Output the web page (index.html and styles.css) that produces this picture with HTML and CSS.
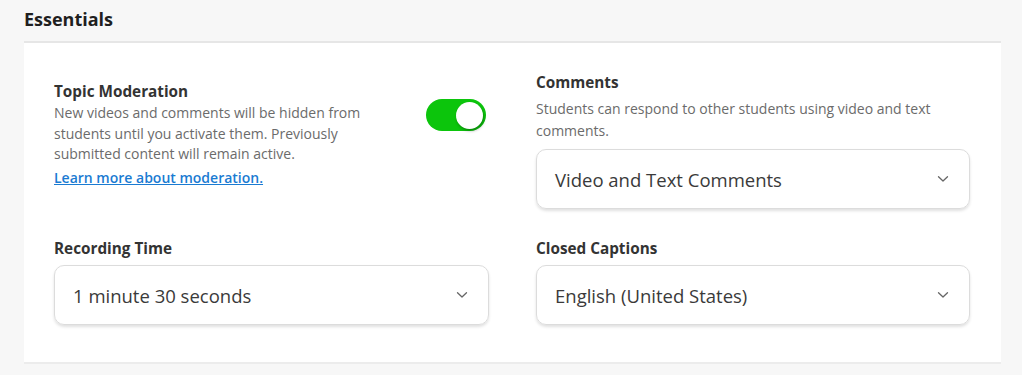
FILE: index.html
```html
<!DOCTYPE html>
<html lang="en">
<head>
    <meta charset="UTF-8">
    <meta name="viewport" content="width=device-width, initial-scale=1.0">
    <title>Essentials</title>
    <link rel="stylesheet" href="styles.css">
</head>
<body>

    <div class="essentials">
        <h2 class="section-title">Essentials</h2>

        <div class="card">
            <div class="setting moderation">
                <div class="moderation-text">
                    <h3 class="setting-label">Topic Moderation</h3>
                    <p class="setting-desc">New videos and comments will be hidden from students until you activate them. Previously submitted content will remain active.</p>
                    <a class="learn-link" href="#">Learn more about moderation.</a>
                </div>
                <button class="toggle is-on" aria-label="Topic Moderation"><span class="knob"></span></button>
            </div>

            <div class="setting">
                <h3 class="setting-label">Comments</h3>
                <p class="setting-desc">Students can respond to other students using video and text comments.</p>
                <div class="select-box">
                    <span>Video and Text Comments</span>
                    <svg class="chevron" width="12" height="8" viewBox="0 0 12 8"><path d="M1.5 1.8 L6 6 L10.5 1.8" fill="none" stroke="#666" stroke-width="1.3" stroke-linecap="round" stroke-linejoin="round"/></svg>
                </div>
            </div>

            <div class="setting">
                <h3 class="setting-label">Recording Time</h3>
                <div class="select-box">
                    <span>1 minute 30 seconds</span>
                    <svg class="chevron" width="12" height="8" viewBox="0 0 12 8"><path d="M1.5 1.8 L6 6 L10.5 1.8" fill="none" stroke="#666" stroke-width="1.3" stroke-linecap="round" stroke-linejoin="round"/></svg>
                </div>
            </div>

            <div class="setting">
                <h3 class="setting-label">Closed Captions</h3>
                <div class="select-box">
                    <span>English (United States)</span>
                    <svg class="chevron" width="12" height="8" viewBox="0 0 12 8"><path d="M1.5 1.8 L6 6 L10.5 1.8" fill="none" stroke="#666" stroke-width="1.3" stroke-linecap="round" stroke-linejoin="round"/></svg>
                </div>
            </div>
        </div>
    </div>

</body>
</html>
```

FILE: styles.css
```css
body {
    margin: 0;
    background-color: #f7f7f7;
    font-family: "Open Sans", "Lato", sans-serif;
    color: #333;
}

.essentials {
    padding: 8px 21px 0 24px;
}

.section-title {
    margin: 0 0 11px;
    font-size: 18px;
    line-height: 22px;
    font-weight: 700;
    color: #1f1f1f;
}

.card {
    background-color: #fff;
    border-top: 2px solid #e6e6e6;
    border-bottom: 2px solid #ececec;
    padding: 29px 31px 37px 30px;
    display: grid;
    grid-template-columns: 435px 434px;
    column-gap: 47px;
    row-gap: 29px;
}

.setting {
    display: flex;
    flex-direction: column;
}

.setting-label {
    margin: 0 0 6px;
    font-size: 15.3px;
    line-height: 20px;
    font-weight: 700;
    color: #333;
}

.setting-desc {
    margin: 0;
    font-size: 14px;
    line-height: 22px;
    color: #6b6b6b;
}

.moderation {
    flex-direction: row;
    align-items: flex-start;
    justify-content: space-between;
    padding-top: 9px;
}

.moderation-text {
    width: 340px;
}

.moderation .setting-label {
    margin-bottom: 2px;
}

.moderation .setting-desc {
    line-height: 20.5px;
    margin-bottom: 1px;
}

.learn-link {
    font-size: 14px;
    line-height: 20px;
    color: #1a7bd2;
    font-weight: 600;
    text-decoration: underline;
}

.toggle {
    margin: 18px 3px 0 0;
    width: 60px;
    height: 32px;
    border: none;
    border-radius: 16px;
    background-color: #0cc50c;
    padding: 0;
    cursor: pointer;
    display: flex;
    align-items: center;
    justify-content: flex-end;
}

.knob {
    width: 27px;
    height: 27px;
    margin-right: 3px;
    border-radius: 50%;
    background-color: #fff;
    box-shadow: 1px 2px 3px rgba(0,0,0,0.3);
}

.select-box {
    margin-top: 1px;
    height: 60px;
    box-sizing: border-box;
    border: 1px solid #dcdcdc;
    border-radius: 10px;
    box-shadow: 0 2px 3px rgba(0,0,0,0.12);
    padding: 0 20px 0 18px;
    display: flex;
    align-items: center;
    justify-content: space-between;
    font-size: 18.5px;
    color: #3a3a3a;
}

.setting-desc + .select-box {
    margin-top: 7px;
}

.chevron {
    display: block;
}
```
